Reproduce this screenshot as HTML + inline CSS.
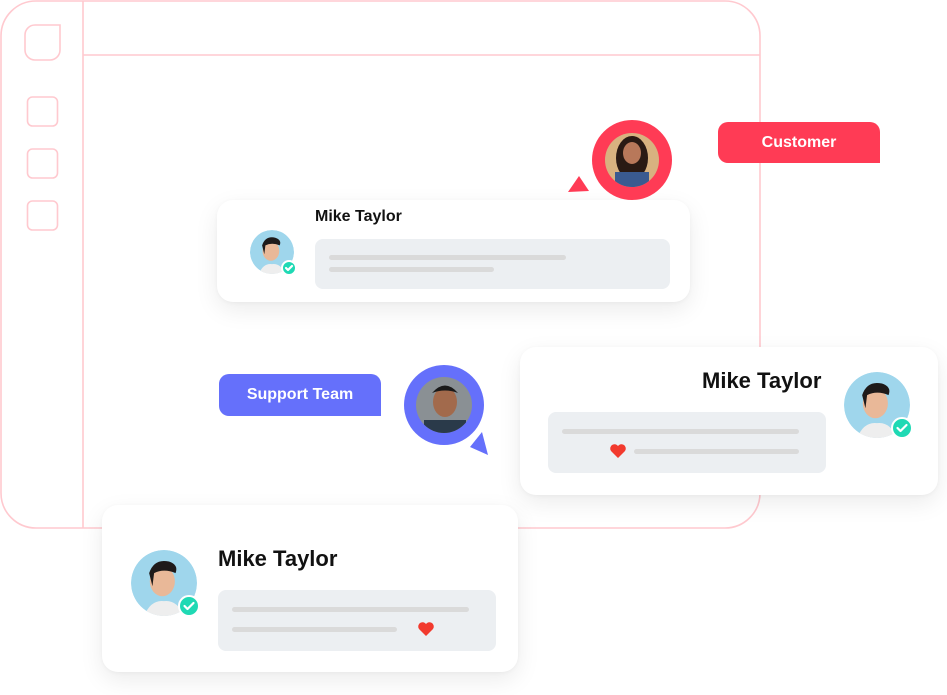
<!DOCTYPE html>
<html><head><meta charset="utf-8"><style>
*{margin:0;padding:0;box-sizing:border-box}
body{width:947px;height:695px;background:#fff;position:relative;overflow:hidden;font-family:"Liberation Sans",sans-serif}
.abs{position:absolute}
.card{position:absolute;background:#fff;border-radius:16px;box-shadow:0 8px 24px rgba(0,0,0,0.08),0 1px 4px rgba(0,0,0,0.04)}
.name{position:absolute;font-weight:bold;color:#111;white-space:nowrap}
.bub{position:absolute;background:#eceff2;border-radius:8px}
.ln{position:absolute;height:5px;border-radius:3px;background:#dadada}
.tag{position:absolute;color:#fff;font-weight:bold;font-size:16px;text-align:center;border-radius:10px 10px 0 10px}
</style></head><body>
<svg class="abs" style="left:0;top:0" width="947" height="695">
<g fill="none" stroke="#ffc9cf" stroke-width="1.6">
<path d="M36 1 H725 A35 35 0 0 1 760 36 V493 A35 35 0 0 1 725 528 H36 A35 35 0 0 1 1 493 V36 A35 35 0 0 1 36 1Z"/>
<line x1="83" y1="1" x2="83" y2="528"/>
<line x1="83" y1="55" x2="760" y2="55"/>
<path d="M35 25 H60 V50 A10 10 0 0 1 50 60 H35 A10 10 0 0 1 25 50 V35 A10 10 0 0 1 35 25Z"/>
<rect x="27.5" y="97" width="30" height="29" rx="5"/>
<rect x="27.5" y="149" width="30" height="29" rx="5"/>
<rect x="27.5" y="201" width="30" height="29" rx="5"/>
</g>
</svg>

<div class="tag" style="left:718px;top:122px;width:162px;height:41px;line-height:41px;background:#ff3b55">Customer</div>

<!-- top card -->
<div class="card" style="left:217px;top:200px;width:473px;height:102px"></div>
<div class="name" style="left:315px;top:208px;font-size:16px">Mike Taylor</div>
<div class="bub" style="left:315px;top:239px;width:355px;height:50px"></div>
<div class="ln" style="left:329px;top:255px;width:237px"></div>
<div class="ln" style="left:329px;top:267px;width:165px"></div>

<!-- right card -->
<div class="card" style="left:520px;top:347px;width:418px;height:148px"></div>
<div class="name" style="left:702px;top:368px;font-size:22px">Mike Taylor</div>
<div class="bub" style="left:548px;top:412px;width:278px;height:61px"></div>
<div class="ln" style="left:562px;top:429px;width:237px"></div>
<div class="ln" style="left:634px;top:449px;width:165px"></div>

<!-- bottom card -->
<div class="card" style="left:102px;top:505px;width:416px;height:167px"></div>
<div class="name" style="left:218px;top:546px;font-size:22px">Mike Taylor</div>
<div class="bub" style="left:218px;top:590px;width:278px;height:61px"></div>
<div class="ln" style="left:232px;top:607px;width:237px"></div>
<div class="ln" style="left:232px;top:627px;width:165px"></div>

<div class="tag" style="left:219px;top:374px;width:162px;height:42px;line-height:42px;background:#6570fb">Support Team</div>

<svg class="abs" style="left:0;top:0" width="947" height="695">
<defs>
<clipPath id="c1"><circle cx="272" cy="252" r="22"/></clipPath>
<clipPath id="c2"><circle cx="877" cy="405" r="33"/></clipPath>
<clipPath id="c3"><circle cx="164" cy="583" r="33"/></clipPath>
<clipPath id="cw"><circle cx="632" cy="160" r="27"/></clipPath>
<clipPath id="cm"><circle cx="444" cy="405" r="28"/></clipPath>
<g id="guy">
<circle cx="0" cy="0" r="1" fill="#9fd6ec"/>
<ellipse cx="-0.05" cy="-0.05" rx="0.38" ry="0.45" fill="#e9b898"/>
<path d="M-0.45 -0.3 Q-0.3 -0.75 0.15 -0.65 Q0.45 -0.55 0.35 -0.3 Q0 -0.45 -0.3 -0.3 L-0.35 0.1 Z" fill="#1e1a1a"/>
<path d="M-0.6 1 Q-0.4 0.5 0 0.55 Q0.4 0.5 0.6 1Z" fill="#eee"/>
</g>
</defs>
<path d="M568 192 L579 176 L589 191Z" fill="#ff3b55"/>
<circle cx="632" cy="160" r="40" fill="#ff3b55"/>
<g clip-path="url(#cw)"><rect x="600" y="130" width="70" height="60" fill="#d8b280"/><ellipse cx="632" cy="158" rx="16" ry="22" fill="#2a1a14"/><ellipse cx="632" cy="153" rx="9" ry="11" fill="#b8785a"/><rect x="615" y="172" width="34" height="20" fill="#3a5a90"/></g>

<path d="M470 447 L482 432 L488 455Z" fill="#6570fb"/>
<circle cx="444" cy="405" r="40" fill="#6570fb"/>
<g clip-path="url(#cm)"><rect x="410" y="370" width="70" height="70" fill="#8a9094"/><ellipse cx="445" cy="402" rx="12" ry="15" fill="#a26a4c"/><path d="M432 393 Q445 378 458 393 Q445 388 432 393Z" fill="#1a1a1a"/><rect x="424" y="420" width="42" height="20" fill="#2a3a4a"/></g>

<g clip-path="url(#c1)"><use href="#guy" transform="translate(272 252) scale(22)"/></g>
<g clip-path="url(#c2)"><use href="#guy" transform="translate(877 405) scale(33)"/></g>
<g clip-path="url(#c3)"><use href="#guy" transform="translate(164 583) scale(33)"/></g>

<g fill="#1fd9b4" stroke="#fff" stroke-width="2">
<circle cx="289" cy="268" r="7"/><circle cx="902" cy="428" r="10"/><circle cx="189" cy="606" r="10"/>
</g>
<g fill="none" stroke="#fff" stroke-width="2.2" stroke-linecap="round" stroke-linejoin="round">
<path d="M286 268 l2 2 l4 -4"/><path d="M897.5 428 l3 3 l6 -6"/><path d="M184.5 606 l3 3 l6 -6"/>
</g>
<g fill="#f23a2e">
<path d="M618 458 L611 451 A4 4 0 0 1 618 446 A4 4 0 0 1 625 451Z"/>
<path d="M426 636 L419 629 A4 4 0 0 1 426 624 A4 4 0 0 1 433 629Z"/>
</g>
</svg>
</body></html>
